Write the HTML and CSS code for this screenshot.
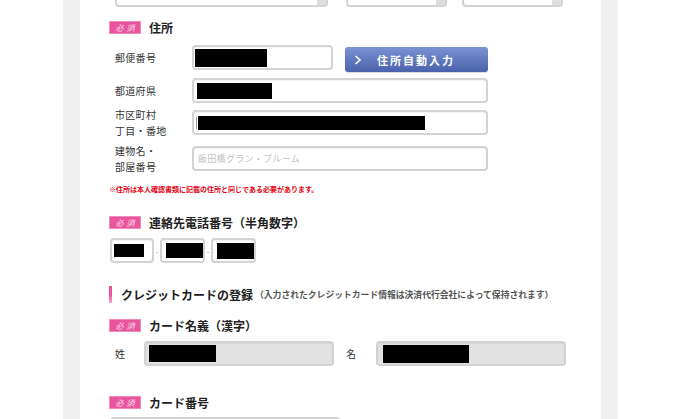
FILE: index.html
```html
<!DOCTYPE html>
<html lang="ja">
<head>
  <meta charset="UTF-8" />
  <title>会員登録</title>
  <link rel="stylesheet" href="styles.css">
</head>
<body>
<div class="page">
  <div class="form">

    <!-- 生年月日（上部で切れている） -->
    <div class="select-row">
      <div class="select s-year"><span class="arrow"></span></div>
      <div class="select s-small"><span class="arrow"></span></div>
      <div class="select s-small"><span class="arrow"></span></div>
    </div>

    <div class="head head-addr">
      <span class="req">必須</span>
      <span class="head-title">住所</span>
    </div>

    <div class="row row-zip">
      <div class="label">郵便番号</div>
      <div class="field f-zip"><span class="redact r-zip"></span></div>
      <button type="button" class="btn-auto">
        <svg class="chev" width="8" height="10" viewBox="0 0 8 10"><polyline points="1.5,1 6,5 1.5,9" fill="none" stroke="#fff" stroke-width="1.6"/></svg>
        <span>住所自動入力</span>
      </button>
    </div>

    <div class="row row-pref">
      <div class="label">都道府県</div>
      <div class="field f-wide"><span class="redact r-pref"></span></div>
    </div>

    <div class="row row-city">
      <div class="label">市区町村<br>丁目・番地</div>
      <div class="field f-wide"><span class="caret"></span><span class="redact r-city"></span></div>
    </div>

    <div class="row row-bldg">
      <div class="label">建物名・<br>部屋番号</div>
      <div class="field f-wide"><span class="placeholder">飯田橋グラン・ブルーム</span></div>
    </div>

    <p class="note">※住所は本人確認書類に記載の住所と同じである必要があります。</p>

    <div class="head head-tel">
      <span class="req">必須</span>
      <span class="head-title">連絡先電話番号（半角数字）</span>
    </div>

    <div class="tel-row">
      <div class="field f-tel1"><span class="redact r-tel1"></span></div>
      <span class="dash">-</span>
      <div class="field f-tel"><span class="redact r-tel2"></span></div>
      <span class="dash">-</span>
      <div class="field f-tel"><span class="redact r-tel3"></span></div>
    </div>

    <div class="cc-head">
      <span class="bar"></span>
      <span class="cc-title">クレジットカードの登録</span>
      <span class="cc-sub">（入力されたクレジットカード情報は決済代行会社によって保持されます）</span>
    </div>

    <div class="head head-name">
      <span class="req">必須</span>
      <span class="head-title">カード名義（漢字）</span>
    </div>

    <div class="name-row">
      <div class="label-sm">姓</div>
      <div class="field gray f-name"><span class="redact r-sei"></span></div>
      <div class="label-sm label-mei">名</div>
      <div class="field gray f-name"><span class="redact r-mei"></span></div>
    </div>

    <div class="head head-card">
      <span class="req">必須</span>
      <span class="head-title">カード番号</span>
    </div>

    <div class="field gray f-card"></div>

  </div>
</div>
</body>
</html>
```

FILE: styles.css
```css
body {
  margin: 0;
  background: #fff;
  font-family: "Noto Sans CJK JP", "Noto Sans", sans-serif;
  color: #333;
  overflow: hidden;
}

.page {
  margin-left: 63px;
  width: 555px;
  padding: 0 17px;
  box-sizing: border-box;
  background: #f0f0f0;
  height: 100vh;
}

.form {
  background: #fff;
  height: 100%;
  padding-left: 29px;
  display: flex;
  flex-direction: column;
  align-items: flex-start;
}

/* select boxes at top */
.select-row {
  display: flex;
  margin-top: -18px;
  padding-left: 6px;
}

.select {
  position: relative;
  height: 25px;
  box-sizing: border-box;
  border: 2px solid #d3d3d3;
  border-radius: 4px;
  background: #fff;
}

.select .arrow {
  position: absolute;
  right: 0;
  top: 0;
  bottom: 0;
  width: 9px;
  background: #dedede;
  border-radius: 0 2px 2px 0;
}

.s-year { width: 213px; margin-right: 18px; }
.s-small { width: 101px; margin-right: 15px; }

/* section heading with badge */
.head {
  display: flex;
  align-items: center;
  height: 13px;
  flex-shrink: 0;
}

.req {
  width: 32px;
  height: 13px;
  box-sizing: border-box;
  background: #e9559c;
  border: 1px solid #f08cbc;
  color: #fde4f0;
  font-size: 8px;
  line-height: 11px;
  letter-spacing: 3px;
  text-indent: 3px;
  text-align: center;
  font-style: italic;
  margin-right: 8px;
}

.head-title {
  font-size: 12px;
  font-weight: bold;
  color: #222;
  line-height: 13px;
}

.head-addr { margin-top: 14px; }
.head-tel { margin-top: 22px; }
.head-name { margin-top: 16px; }
.head-card { margin-top: 30px; }

/* form rows */
.row {
  display: flex;
  align-items: center;
  height: 25px;
  flex-shrink: 0;
}

.row-zip { margin-top: 11px; }
.row-pref { margin-top: 8px; }
.row-city { margin-top: 7px; }
.row-bldg { margin-top: 11px; }

.label {
  width: 77px;
  padding-left: 6px;
  font-size: 10px;
  letter-spacing: 0.3px;
  line-height: 16px;
  color: #333;
}

.field {
  height: 25px;
  flex-shrink: 0;
  box-sizing: border-box;
  border: 2px solid #d3d3d3;
  border-radius: 4px;
  background: #fff;
  box-shadow: inset 0 1px 1px rgba(0, 0, 0, 0.05);
  display: flex;
  align-items: center;
  padding-left: 1px;
}

.field.gray {
  background: #e2e2e2;
  border-color: #d2d2d2;
}

.f-zip { width: 141px; }
.f-wide { width: 296px; }
.f-tel1 { width: 44px; }
.f-tel { width: 45px; }
.f-name { width: 190px; }
.f-card { width: 230px; margin-top: 8px; margin-left: 1px; }

.redact {
  display: block;
  background: #000;
}

.r-zip { width: 72px; height: 18px; }
.r-pref { width: 75px; height: 16px; margin-left: 2px; }
.r-city { width: 227px; height: 14px; margin-left: 1px; }
.r-tel1 { width: 30px; height: 13px; margin-left: 1px; }
.r-tel2 { width: 38px; height: 15px; margin-left: 3px; }
.r-tel3 { width: 37px; height: 16px; margin-left: 3px; }
.r-sei { width: 67px; height: 17px; margin-left: 2px; }
.r-mei { width: 86px; height: 18px; margin-left: 4px; }

.caret {
  width: 1px;
  height: 12px;
  background: #999;
  margin-left: 1px;
}

.placeholder {
  font-size: 9px;
  letter-spacing: 0.3px;
  color: #c2c2c2;
  margin-left: 3px;
}

.btn-auto {
  align-self: flex-start;
  margin-left: 12px;
  margin-top: 2px;
  width: 143px;
  height: 25px;
  border: none;
  border-radius: 3px;
  background: linear-gradient(#7a93d2, #4962ad);
  box-shadow: 0 1px 1px rgba(0, 0, 0, 0.15);
  color: #fff;
  font-family: inherit;
  font-size: 11px;
  font-weight: bold;
  letter-spacing: 2px;
  display: flex;
  align-items: center;
  padding: 0 0 0 9px;
}

.btn-auto .chev {
  margin-right: 15px;
}

.note {
  margin: 13px 0 0;
  font-size: 7px;
  line-height: 10px;
  font-weight: bold;
  color: #e60012;
}

/* phone */
.tel-row {
  display: flex;
  align-items: center;
  margin-top: 9px;
  padding-left: 1px;
  flex-shrink: 0;
}

.dash {
  width: 6px;
  text-align: center;
  font-size: 7px;
  color: #777;
}

/* credit card heading */
.cc-head {
  display: flex;
  align-items: center;
  height: 17px;
  margin-top: 23px;
  flex-shrink: 0;
}

.cc-head .bar {
  width: 3px;
  height: 17px;
  background: linear-gradient(#e9559c 0%, #e9559c 50%, #f5a6c9 100%);
  margin-right: 9px;
}

.cc-title {
  font-size: 12px;
  font-weight: bold;
  color: #222;
}

.cc-sub {
  font-size: 8.8px;
  font-weight: bold;
  color: #555;
  margin-left: 2px;
}

/* card holder name */
.name-row {
  display: flex;
  align-items: center;
  margin-top: 9px;
  flex-shrink: 0;
}

.label-sm {
  width: 29px;
  padding-left: 6px;
  font-size: 10px;
  color: #333;
}

.label-mei {
  width: 30px;
  padding-left: 12px;
}
```
